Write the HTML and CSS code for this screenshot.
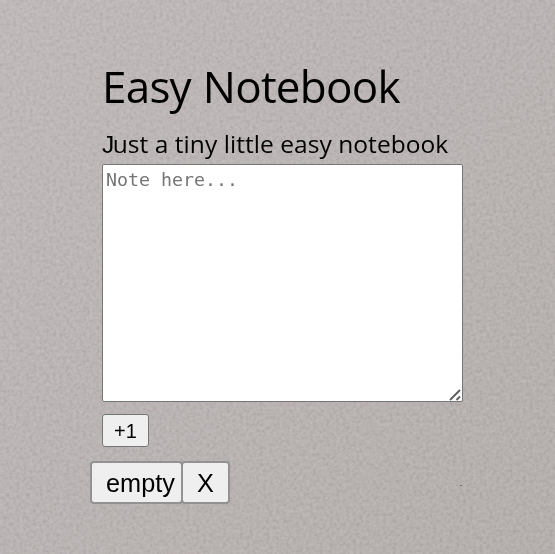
FILE: index.html
```html
<!DOCTYPE html>
<html lang="en">
<head>
<meta charset="utf-8">
<title>Easy Notebook</title>
<link rel="stylesheet" href="styles.css">
</head>
<body>
<svg class="paper" aria-hidden="true">
  <defs>
    <linearGradient id="shade" x1="0" y1="0" x2="1" y2="1">
      <stop offset="0" stop-color="#bfb9ba"/>
      <stop offset="1" stop-color="#b4afad"/>
    </linearGradient>
    <filter id="grain" x="0" y="0" width="100%" height="100%" color-interpolation-filters="sRGB">
      <feTurbulence type="fractalNoise" baseFrequency="0.3" numOctaves="3" seed="8"/>
      <feColorMatrix values="0.34 0 0 0 0.34  0.34 0 0 0 0.33  0.34 0 0 0 0.33  0 0 0 0 1"/>
    </filter>
  </defs>
  <rect width="100%" height="100%" fill="url(#shade)"/>
  <rect class="grain" width="100%" height="100%" filter="url(#grain)"/>
  <rect x="460" y="485" width="2" height="1" fill="#716d6e"/>
</svg>
<main class="notebook">
  <h1 class="title">Easy Notebook</h1>
  <p class="subtitle">Just a tiny little easy notebook</p>
  <div class="field">
    <textarea class="note" placeholder="Note here..." spellcheck="false"></textarea>
    <svg class="grip" viewBox="0 0 12 12" aria-hidden="true">
      <path d="M1 11L11 1M7.5 11L11 7.5"/>
    </svg>
  </div>
  <button class="add">+1</button>
  <div class="actions">
    <button class="action">empty</button>
    <button class="action close">X</button>
  </div>
</main>
</body>
</html>
```
FILE: styles.css
```css
* { box-sizing: border-box; }
body {
  margin: 0;
  height: 554px;
  overflow: hidden;
  background: #bab4b4;
  color: #000;
}
.paper {
  position: fixed;
  inset: 0;
  z-index: -1;
  width: 100%;
  height: 100%;
}
.grain { mix-blend-mode: soft-light; }
.notebook {
  display: flex;
  flex-direction: column;
  align-items: flex-start;
  padding: 56px 0 0 102px;
}
.title, .subtitle {
  margin: 0;
  font-family: "Segoe UI", "Open Sans", sans-serif;
  font-weight: 400;
  white-space: nowrap;
}
.title {
  height: 72px;
  font-size: 44px;
  line-height: 60px;
  letter-spacing: -0.75px;
  word-spacing: 1.2px;
}
.subtitle {
  height: 36px;
  font-size: 24.5px;
  line-height: 32px;
  letter-spacing: 0.06px;
}
.subtitle::first-letter {
  font-family: "Liberation Sans", Arial, sans-serif;
  letter-spacing: -1.6px;
}
.field { position: relative; }
.note {
  display: block;
  width: 361px;
  height: 238px;
  padding: 3px;
  border: 1px solid #767676;
  border-radius: 2px;
  background: #fff;
  font: 18.3px/24px "DejaVu Sans Mono", monospace;
  outline: 0;
}
.note::placeholder { color: #757575; }
.note::-webkit-resizer { background: transparent; }
.grip {
  position: absolute;
  right: 2px;
  bottom: 1px;
  width: 12px;
  height: 12px;
  fill: none;
  stroke: #5c5c5c;
  stroke-width: 1.8;
  pointer-events: none;
}
button {
  padding: 0;
  border: 1px solid #767676;
  background: #efefef;
  color: #000;
  font-family: "Liberation Sans", Arial, sans-serif;
}
.add {
  width: 47px;
  height: 33px;
  margin-top: 12px;
  padding-top: 1px;
  border-radius: 3px;
  font-size: 20px;
}
.actions {
  display: flex;
  margin: 14px 0 0 -12px;
}
.action {
  width: 93px;
  height: 43px;
  padding: 2px 0 0 8px;
  border: 2px solid #929292;
  border-radius: 4px;
  font-size: 25.3px;
}
.close {
  width: 49px;
  margin-left: -2px;
  padding-left: 0;
}
```
